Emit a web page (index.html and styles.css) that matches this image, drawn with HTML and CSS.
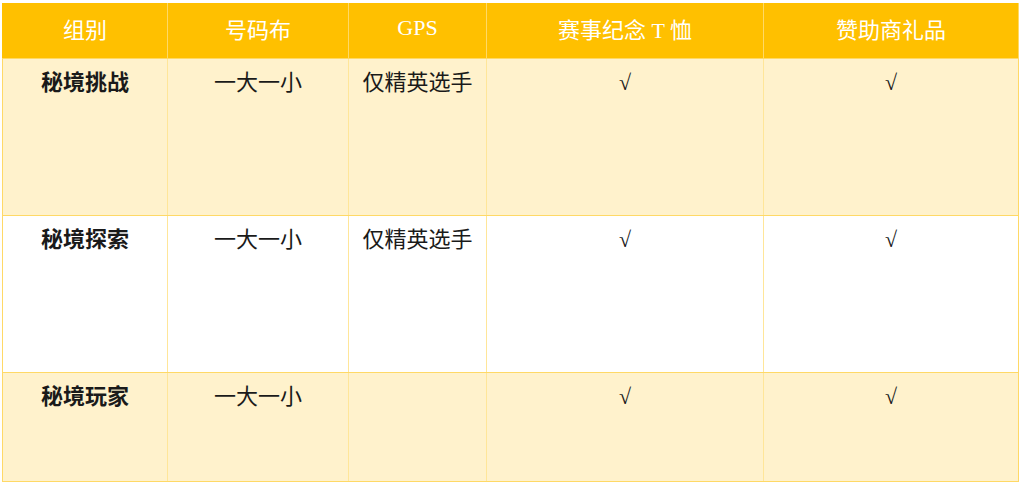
FILE: index.html
```html
<!DOCTYPE html>
<html lang="zh">
<head>
<meta charset="utf-8">
<link rel="stylesheet" href="styles.css">
</head>
<body>
<table class="tbl">
  <colgroup>
    <col class="c1"><col class="c2"><col class="c3"><col class="c4"><col class="c5">
  </colgroup>
  <thead>
    <tr class="head">
      <th>组别</th><th>号码布</th><th>GPS</th><th>赛事纪念 T 恤</th><th>赞助商礼品</th>
    </tr>
  </thead>
  <tbody>
    <tr class="row tall alt">
      <td class="name">秘境挑战</td><td>一大一小</td><td>仅精英选手</td><td class="chk">√</td><td class="chk">√</td>
    </tr>
    <tr class="row tall">
      <td class="name">秘境探索</td><td>一大一小</td><td>仅精英选手</td><td class="chk">√</td><td class="chk">√</td>
    </tr>
    <tr class="row short alt">
      <td class="name">秘境玩家</td><td>一大一小</td><td></td><td class="chk">√</td><td class="chk">√</td>
    </tr>
  </tbody>
</table>
</body>
</html>
```

FILE: styles.css
```css
html, body {
  margin: 0;
  padding: 0;
  background: #ffffff;
}
body {
  padding: 3px 0 0 2px;
  font-family: "Liberation Serif", "Noto Sans CJK SC", serif;
}
.tbl {
  border-collapse: collapse;
  table-layout: fixed;
  width: 1016px;
}
.c1 { width: 165px; }
.c2 { width: 181px; }
.c3 { width: 138px; }
.c4 { width: 277px; }
.c5 { width: 255px; }
.tbl th, .tbl td {
  border-top: 1px solid #ffd966;
  border-bottom: 1px solid #ffd966;
  border-left: 1px solid #ffe699;
  border-right: 1px solid #ffe699;
  text-align: center;
  padding: 0;
}
.tbl tr > :first-child { border-left-color: #ffd966; }
.tbl tr > :last-child { border-right-color: #ffd966; }
.head th {
  background: #ffc000;
  color: #ffffff;
  font-weight: normal;
  font-size: 22px;
  height: 48px;
  padding-bottom: 6px;
  vertical-align: middle;
  border-top-color: #ffc000;
  border-left-color: #ffd966;
  border-right-color: #ffd966;
}
.head th:first-child { border-left-color: #ffc000; }
.row td {
  vertical-align: top;
  font-size: 22px;
  line-height: 32px;
  padding-top: 8px;
  color: #1a1a1a;
}
.row.alt td { background: #fff2cc; }
.tall td { height: 148px; }
.short td { height: 100px; }
.name { font-weight: bold; color: #000; }
.chk { font-size: 18px; }
```
